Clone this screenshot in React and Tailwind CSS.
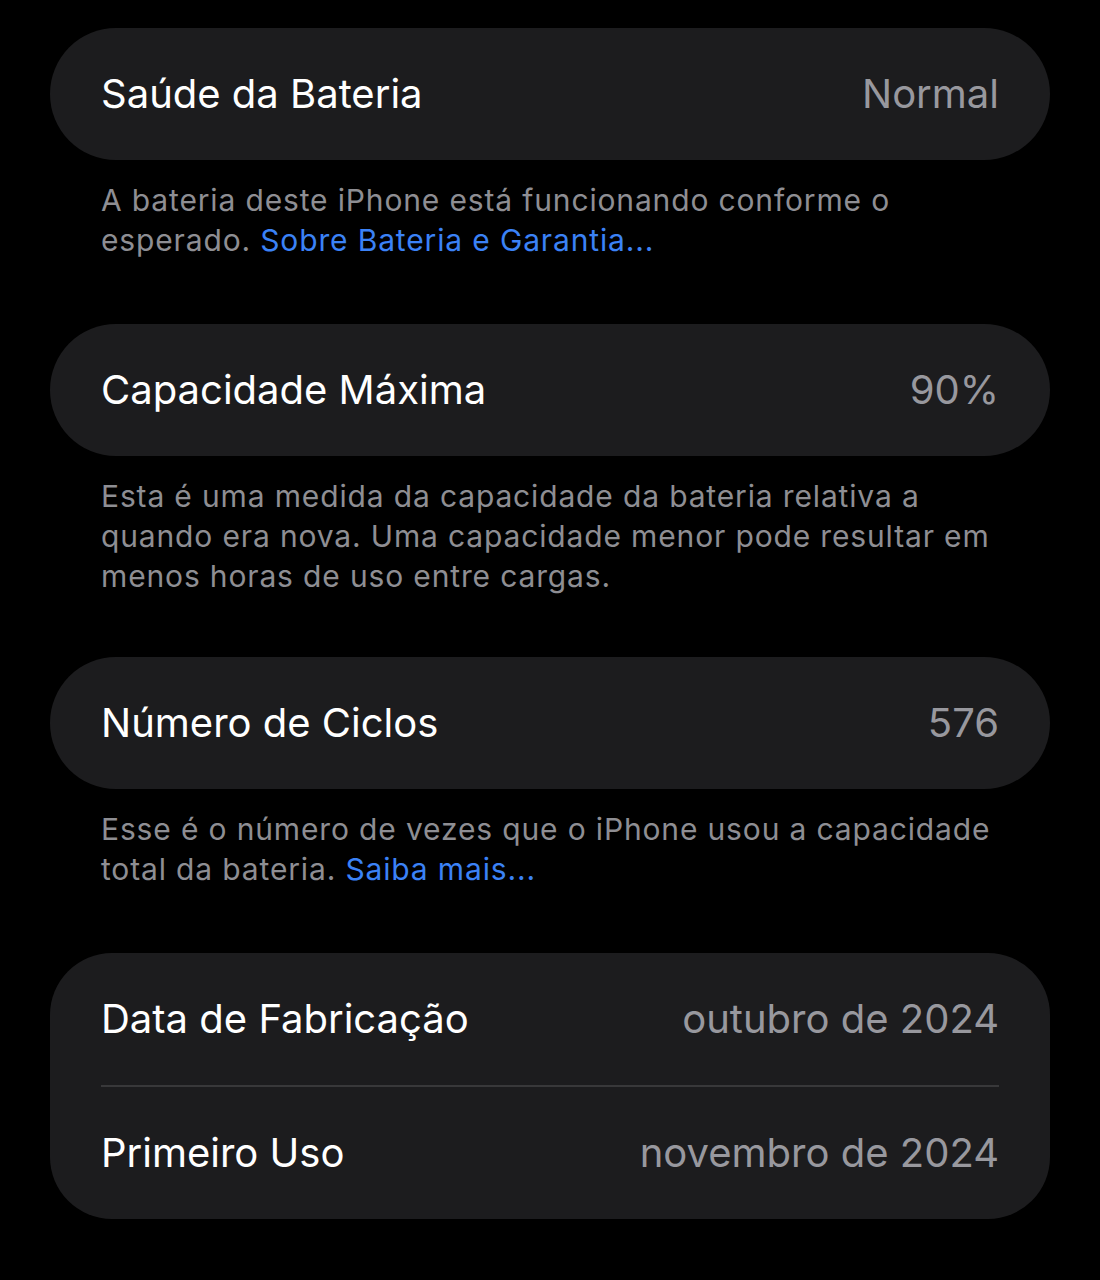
const font = { fontFamily: 'Inter, "Noto Sans", sans-serif' };

const Row = ({ label, value }) => (
  <div className="flex h-[132px] items-center justify-between">
    <span className="text-[40px] text-white">{label}</span>
    <span className="text-[40px] text-[#98989e]">{value}</span>
  </div>
);

const Footer = ({ children }) => (
  <p className="pl-[101px] pr-[94px] pt-[20px] text-[30px] leading-[40px] text-[#8e8e93] tracking-[0.85px]">{children}</p>
);

const Link = ({ children }) => <span className="text-[#3b82f6]">{children}</span>;

export default function App() {
  return (
    <div className="min-h-[1280px] bg-black pt-[28px]" style={font}>
      <div className="mx-[50px]">
        <div className="rounded-full bg-[#1c1c1e] px-[51px]">
          <Row label="Saúde da Bateria" value="Normal" />
        </div>
      </div>
      <Footer>
        A bateria deste iPhone está funcionando conforme o esperado. <Link>Sobre Bateria e Garantia...</Link>
      </Footer>

      <div className="mx-[50px] mt-[64px]">
        <div className="rounded-full bg-[#1c1c1e] px-[51px]">
          <Row label="Capacidade Máxima" value="90%" />
        </div>
      </div>
      <Footer>
        Esta é uma medida da capacidade da bateria relativa a quando era nova. Uma capacidade menor pode resultar em menos horas de uso entre cargas.
      </Footer>

      <div className="mx-[50px] mt-[61px]">
        <div className="rounded-full bg-[#1c1c1e] px-[51px]">
          <Row label="Número de Ciclos" value="576" />
        </div>
      </div>
      <Footer>
        Esse é o número de vezes que o iPhone usou a capacidade total da bateria. <Link>Saiba mais...</Link>
      </Footer>

      <div className="mx-[50px] mt-[64px]">
        <div className="rounded-[62px] bg-[#1c1c1e] px-[51px]">
          <Row label="Data de Fabricação" value="outubro de 2024" />
          <div className="h-[2px] bg-[#38383a]" />
          <Row label="Primeiro Uso" value="novembro de 2024" />
        </div>
      </div>
    </div>
  );
}
